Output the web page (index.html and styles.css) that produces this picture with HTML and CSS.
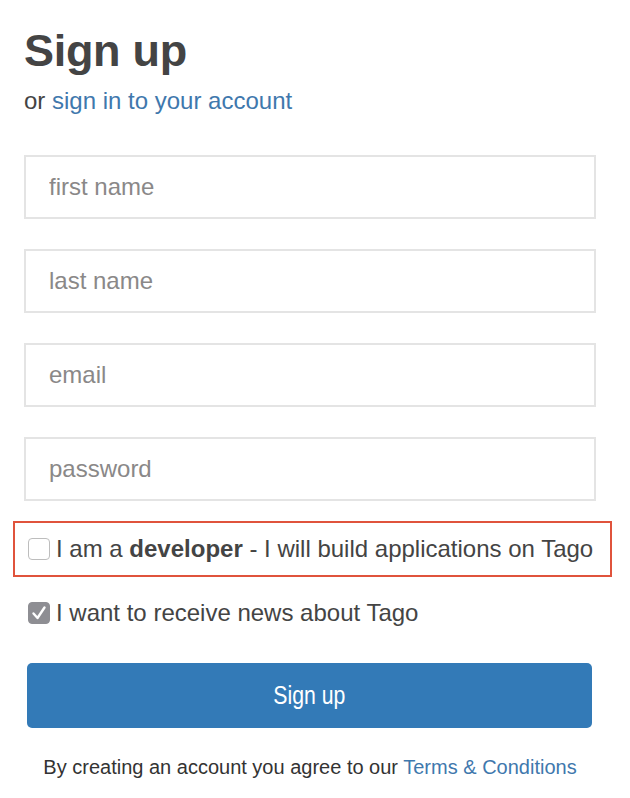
FILE: index.html
```html
<!DOCTYPE html>
<html>
<head>
<meta charset="utf-8">
<link rel="stylesheet" href="styles.css">
</head>
<body>
<main class="page">
  <h1 class="title">Sign up</h1>
  <p class="subtitle">or <a class="link" href="#">sign in to your account</a></p>
  <form class="form">
    <input class="field" type="text" placeholder="first name">
    <input class="field" type="text" placeholder="last name">
    <input class="field" type="email" placeholder="email">
    <input class="field" type="password" placeholder="password">
    <label class="check check-dev">
      <span class="box"></span>
      <span class="label-text">I am a <b>developer</b> - I will build applications on Tago</span>
    </label>
    <label class="check check-news">
      <span class="box box-on">
        <svg viewBox="0 0 22 22" width="22" height="22"><path d="M5.5 11.5 L9.5 16 L16.5 5.5" fill="none" stroke="#fff" stroke-width="2.4" stroke-linecap="round" stroke-linejoin="round"/></svg>
      </span>
      <span class="label-text">I want to receive news about Tago</span>
    </label>
    <button class="submit" type="button"><span class="submit-text">Sign up</span></button>
    <p class="terms">By creating an account you agree to our <a class="link" href="#">Terms &amp; Conditions</a></p>
  </form>
</main>
</body>
</html>
```

FILE: styles.css
```css
* { box-sizing: border-box; }
html, body { margin: 0; padding: 0; background: #fff; }
body { font-family: "Liberation Sans", Arial, Helvetica, sans-serif; color: #444; }
.page { width: 630px; padding: 24px 34px 0 24px; }
.title {
  margin: 0;
  font-size: 45px;
  line-height: 54px;
  font-weight: 700;
  color: #444;
  letter-spacing: -0.3px;
}
.subtitle {
  margin: 8px 0 0 0;
  font-size: 24px;
  line-height: 30px;
  color: #444;
}
.link { color: #3f78ad; text-decoration: none; }
.form { display: flex; flex-direction: column; margin-top: 39px; }
.field {
  display: block;
  width: 572px;
  height: 64px;
  margin: 0 0 30px 0;
  padding: 0 23px;
  border: 2px solid #e4e4e4;
  border-radius: 0;
  font-family: inherit;
  font-size: 24px;
  color: #444;
  outline: none;
  background: #fff;
}
.field::placeholder { color: #8a8888; }
.check {
  display: flex;
  align-items: center;
  font-size: 24px;
  color: #444;
  gap: 6px;
}
.check-dev {
  margin: -10px 0 0 -11px;
  width: 599px;
  height: 56px;
  padding-left: 13px;
  border: 2px solid #e0533c;
}
.check-news { margin-top: 21px; padding-left: 4px; height: 30px; }
.box {
  width: 22px;
  height: 22px;
  flex: none;
  border: 1.5px solid #bdbdbd;
  border-radius: 4px;
  background: #fff;
  display: flex;
}
.box-on { background: #8e8e93; border-color: #8e8e93; }
.box-on svg { margin: -1.5px; }
.label-text b { font-weight: 700; }
.submit {
  margin: 35px 0 0 3px;
  width: 565px;
  height: 65px;
  border: none;
  border-radius: 5px;
  background: #337ab7;
  color: #fff;
  font-family: "Liberation Sans", Arial, sans-serif;
  font-size: 25px;
}
.submit-text { display: inline-block; transform: scaleX(0.85); }
.terms {
  margin: 28px 0 0 0;
  width: 572px;
  text-align: center;
  font-size: 20px;
  color: #333;
}
```
